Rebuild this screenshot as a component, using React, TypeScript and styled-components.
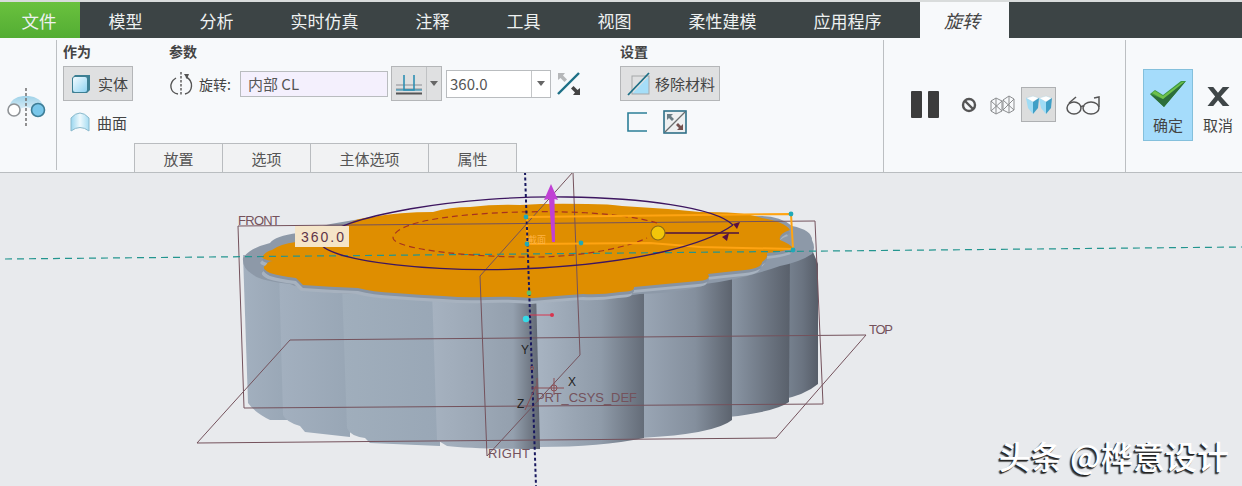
import React from "react";
import styled, { createGlobalStyle } from "styled-components";

const FONT = `"Noto Sans CJK SC", "Noto Sans", sans-serif`;

const GlobalStyle = createGlobalStyle`
  html, body { margin: 0; padding: 0; background: #e8eaed; }
  * { box-sizing: border-box; }
`;

const Page = styled.div`
  width: 1242px;
  height: 486px;
  display: flex;
  flex-direction: column;
  overflow: hidden;
  font-family: ${FONT};
  color: #444;
  background: #e8eaed;
`;

const TabBar = styled.div`
  flex: none;
  display: flex;
  margin-top: 2px;
  background: #3c4445;
  box-shadow: 0 -2px 0 #d9dcdc;
  height: 36px;
`;

const Tab = styled.div`
  display: flex;
  align-items: center;
  justify-content: center;
  padding: 0 28.5px;
  font-size: 17px;
  color: #eef1f1;
`;

const FileTab = styled(Tab)`
  width: 80px;
  padding: 0 2px 0 0;
  font-size: 17.5px;
  background: linear-gradient(#6ac13e, #53ad33);
`;

const ActiveTab = styled(Tab)`
  width: 89px;
  padding: 0 5px 0 0;
  margin-left: 10px;
  background: #f7f9fb;
  color: #444;
  font-size: 18px;
  font-style: italic;
`;

const Ribbon = styled.div`
  height: 135px;
  flex: none;
  display: flex;
  background: #f7f9fb;
  border-bottom: 1px solid #b9bdc0;
`;

const LeadCell = styled.div`
  width: 57px;
  display: flex;
  align-items: center;
  padding: 4px 0 0 7px;
  border-right: 1px solid #bcbfc2;
  margin: 2px 0;
`;

const MainCell = styled.div`
  width: 827px;
  display: flex;
  flex-direction: column;
  justify-content: space-between;
  padding: 3px 0 0 6px;
  border-right: 1px solid #bcbfc2;
  margin-top: 2px;
`;

const Groups = styled.div`
  display: grid;
  grid-template-columns: 106px 451px 1fr;
`;

const Group = styled.div`
  display: flex;
  flex-direction: column;
`;

const GroupLabel = styled.div`
  height: 16px;
  line-height: 16px;
  font-size: 14px;
  font-weight: 700;
  color: #444;
  margin-bottom: 7px;
`;

const PressedButton = styled.div<{ $w: number; $gap: number }>`
  width: ${(p) => p.$w}px;
  height: 35px;
  display: flex;
  align-items: center;
  gap: ${(p) => p.$gap}px;
  padding-left: 6px;
  background: #dfe0e1;
  border: 1px solid #b4b6b8;
  font-size: 15px;
  color: #444;
  white-space: nowrap;
`;

const PlainRow = styled.div`
  display: flex;
  align-items: center;
  gap: 6px;
  height: 24px;
  margin-top: 9px;
  padding-left: 6px;
  font-size: 15px;
  color: #444;
`;

const ParamRow = styled.div`
  display: flex;
  align-items: center;
  height: 35px;
`;

const RotateLabel = styled.span`
  font-size: 14px;
  margin: 0 8px 0 6px;
  white-space: nowrap;
  width: 33px;
`;

const Field = styled.div<{ $w: number; $tint?: boolean }>`
  width: ${(p) => p.$w}px;
  height: ${(p) => (p.$tint ? 26 : 28)}px;
  display: flex;
  align-items: center;
  padding-left: ${(p) => (p.$tint ? 7 : 3)}px;
  background: ${(p) => (p.$tint ? "#f4f0fd" : "#fff")};
  border: 1px solid #b9bcbf;
  font-size: 15px;
  color: #555;
`;

const ValueField = styled(Field)`
  position: relative;
  margin-left: 4px;
`;

const FieldArrow = styled.div`
  position: absolute;
  right: 0;
  top: 0;
  bottom: 0;
  width: 19px;
  border-left: 1px solid #c4c6c8;
  display: flex;
  align-items: center;
  justify-content: center;
`;

const Caret = styled.div`
  width: 0;
  height: 0;
  border-left: 4px solid transparent;
  border-right: 4px solid transparent;
  border-top: 5px solid #666;
`;

const SplitButton = styled.div`
  width: 51px;
  height: 35px;
  margin-left: 3px;
  display: grid;
  grid-template-columns: 34px 1fr;
  background: #dfe0e1;
  border: 1px solid #b4b6b8;
`;

const SplitPart = styled.div`
  display: flex;
  align-items: center;
  justify-content: center;
  & + & {
    border-left: 1px solid #c0c2c4;
  }
`;

const IconRow = styled.div`
  display: flex;
  align-items: center;
  gap: 16px;
  margin-top: 9px;
  padding-left: 7px;
  height: 24px;
`;

const Tabs = styled.div`
  display: flex;
  height: 29px;
  margin-left: 71px;
`;

const SubTab = styled.div<{ $w: number }>`
  width: ${(p) => p.$w}px;
  display: flex;
  align-items: center;
  justify-content: center;
  background: #f1f2f3;
  border: 1px solid #b9bcbf;
  border-bottom: none;
  margin-right: -1px;
  font-size: 15px;
  color: #555;
`;

const ControlsCell = styled.div`
  display: flex;
  align-items: center;
  height: 35px;
  margin-top: 47px;
  padding-left: 27px;
`;

const ControlsFrame = styled.div`
  width: 242px;
  border-right: 1px solid #bcbfc2;
  margin-top: 2px;
`;

const Slot = styled.div<{ $ml: number; $pressed?: boolean }>`
  flex: none;
  margin-left: ${(p) => p.$ml}px;
  display: flex;
  align-items: center;
  justify-content: center;
  ${(p) =>
    p.$pressed
      ? "width: 35px; height: 35px; background: #dcdddd; border: 1px solid #aeb0b2;"
      : ""}
`;

const ActionCell = styled.div`
  flex: 1;
  display: flex;
  padding: 31px 0 0 17px;
  gap: 10px;
`;

const ActionButton = styled.div<{ $primary?: boolean }>`
  width: ${(p) => (p.$primary ? 50 : 30)}px;
  height: 72px;
  display: flex;
  flex-direction: column;
  align-items: center;
  padding-top: ${(p) => (p.$primary ? 10 : 17)}px;
  font-size: 15px;
  color: #444;
  line-height: 18px;
  background: ${(p) => (p.$primary ? "#a5dcfb" : "transparent")};
  border: ${(p) => (p.$primary ? "1px solid #84c0dc" : "none")};
`;

const ActionText = styled.span<{ $top: number }>`
  margin-top: ${(p) => p.$top}px;
  white-space: nowrap;
`;

const Viewport = styled.div`
  position: relative;
  flex: 1;
  background: #e8eaed;
`;

const Scene = styled.svg`
  display: block;
  width: 1242px;
  height: 313px;
`;

const Watermark = styled.div`
  position: absolute;
  right: 13px;
  bottom: 13px;
  font-size: 32px;
  line-height: 36px;
  font-weight: 500;
  color: #fff;
  white-space: nowrap;
  text-shadow: -1px 1px 0 #222, -2px 2px 1px #444;
`;

const PlaneText = styled.text`
  font-family: "Liberation Sans", sans-serif;
  font-size: 13px;
  fill: #74525c;
`;

const AxisText = styled.text`
  font-family: "Liberation Sans", sans-serif;
  font-size: 12px;
  fill: #222;
`;

/* ---- ribbon icons ---- */

const RevolveIcon = () => (
  <svg width="40" height="42" viewBox="0 0 40 42">
    <defs>
      <linearGradient id="archFill" x1="0" y1="0" x2="0" y2="1">
        <stop offset="0" stopColor="#9fd2e8" />
        <stop offset="1" stopColor="#dff0f8" />
      </linearGradient>
    </defs>
    <path d="M2 21 C4 12 12 10 19 10 C26 10 34 12 37 21 L26 25 C24 20 14 20 12 25 Z" fill="url(#archFill)" />
    <circle cx="7" cy="24" r="6" fill="#fff" stroke="#8f9396" strokeWidth="1.6" />
    <circle cx="31" cy="24" r="6.5" fill="#79c7ea" stroke="#3d7d96" strokeWidth="1.6" />
    <line x1="19" y1="2" x2="19" y2="40" stroke="#777" strokeWidth="1.6" strokeDasharray="3 2" />
  </svg>
);

const SolidIcon = () => (
  <svg width="22" height="22" viewBox="0 0 22 22">
    <defs>
      <linearGradient id="solidFill" x1="0" y1="0" x2="1" y2="1">
        <stop offset="0" stopColor="#f3fbff" />
        <stop offset="1" stopColor="#8fd3f2" />
      </linearGradient>
    </defs>
    <path d="M5 2 H20 V17 L17 20 H3 Q2 20 2 19 V5 Z" fill="#3d7f93" />
    <rect x="3" y="4" width="14" height="15" rx="2" fill="url(#solidFill)" />
  </svg>
);

const SurfaceIcon = () => (
  <svg width="22" height="22" viewBox="0 0 22 22">
    <defs>
      <linearGradient id="surfFill" x1="0" y1="0" x2="1" y2="0">
        <stop offset="0" stopColor="#9ad6ef" />
        <stop offset="0.5" stopColor="#eef9fd" />
        <stop offset="1" stopColor="#a5dcf2" />
      </linearGradient>
    </defs>
    <path d="M2 7 Q11 -3 20 7 V20 Q11 13 2 20 Z" fill="url(#surfFill)" stroke="#8ab9cc" strokeWidth="1" />
  </svg>
);

const RotateIcon = () => (
  <svg width="24" height="26" viewBox="0 0 24 26">
    <line x1="12" y1="1" x2="12" y2="25" stroke="#555" strokeWidth="1.4" strokeDasharray="2.5 1.5" />
    <path d="M7 7 C-1 12 1 22 9 23" fill="none" stroke="#555" strokeWidth="1.4" />
    <path d="M16 23 C24 21 25 10 17 6" fill="none" stroke="#555" strokeWidth="1.4" />
    <path d="M15 3 L20 3 L18 8 Z" fill="#555" />
  </svg>
);

const DepthIcon = () => (
  <svg width="26" height="24" viewBox="0 0 26 24">
    <line x1="0" y1="13" x2="26" y2="13" stroke="#a8aaac" strokeWidth="1.5" />
    <line x1="0" y1="17" x2="26" y2="17" stroke="#a8aaac" strokeWidth="1.5" />
    <line x1="0" y1="21.5" x2="26" y2="21.5" stroke="#555" strokeWidth="2" />
    <path d="M8 3 V18 H18 V3" fill="none" stroke="#2e8fb3" strokeWidth="1.6" />
    <line x1="0" y1="18" x2="26" y2="18" stroke="#2e8fb3" strokeWidth="1.2" />
  </svg>
);

const FlipIcon = () => (
  <svg width="24" height="24" viewBox="0 0 24 24">
    <line x1="1" y1="22" x2="22" y2="1" stroke="#1c6f86" strokeWidth="2.4" />
    <path d="M1 1 H8 L6 3.5 L10 7.5 L7.5 10 L3.5 6 L1 8 Z" fill="#b5b7b9" />
    <path d="M23 23 H16 L18 20.5 L14 16.5 L16.5 14 L20.5 18 L23 16 Z" fill="#444" />
  </svg>
);

const RemoveIcon = () => (
  <svg width="24" height="24" viewBox="0 0 24 24">
    <path d="M5 22 L22 4 V22 Z" fill="#a5def8" />
    <rect x="5" y="4" width="17" height="18" fill="none" stroke="#a5a7a9" strokeWidth="1" />
    <line x1="1" y1="23" x2="22" y2="1" stroke="#1c6f86" strokeWidth="1.8" />
  </svg>
);

const ThickenIcon = () => (
  <svg width="20" height="20" viewBox="0 0 20 20">
    <path d="M20 1 H1 V19 H20" fill="none" stroke="#2c7f98" strokeWidth="1.6" />
  </svg>
);

const ThickFlipIcon = () => (
  <svg width="24" height="24" viewBox="0 0 24 24">
    <rect x="1" y="1" width="22" height="22" fill="#eef0f1" stroke="#2f7088" strokeWidth="1.6" />
    <line x1="2" y1="22" x2="22" y2="2" stroke="#6b6d6f" strokeWidth="1.2" />
    <path d="M4 4 H10 L8 6 L11 9 L9 11 L6 8 L4 10 Z" fill="#6b7d85" />
    <path d="M20 20 H14 L16 18 L13 15 L15 13 L18 16 L20 14 Z" fill="#74514f" />
  </svg>
);

const PauseIcon = () => (
  <svg width="28" height="27" viewBox="0 0 28 27">
    <rect x="0" y="0" width="11" height="27" rx="1" fill="#3c3c3c" />
    <rect x="17" y="0" width="11" height="27" rx="1" fill="#3c3c3c" />
  </svg>
);

const BanIcon = () => (
  <svg width="16" height="16" viewBox="0 0 16 16">
    <circle cx="8" cy="8" r="6" fill="none" stroke="#555" strokeWidth="2.4" />
    <line x1="4" y1="4" x2="12" y2="12" stroke="#555" strokeWidth="2.4" />
  </svg>
);

const WireIcon = () => (
  <svg width="25" height="20" viewBox="0 0 25 20" fill="none" stroke="#8b8d8f" strokeWidth="1">
    <path d="M1 6 L6 3 L12 6 L12 16 L6 19 L1 16 Z M6 3 V19 M1 6 L12 16 M12 6 L1 16" />
    <path d="M13 5 L19 1 L24 4 L24 15 L19 18 L13 15 Z M19 1 V18 M13 5 L24 15 M24 4 L13 15" />
  </svg>
);

const ShadedIcon = () => (
  <svg width="26" height="20" viewBox="0 0 26 20">
    <path d="M0 3 L7 1 L13 3 L7 7 Z" fill="#fff" stroke="#b8d6e2" strokeWidth="0.5" />
    <path d="M0 3 L7 7 L7 19 L2 13 Z" fill="#9fdcf5" />
    <path d="M13 3 L7 7 L7 19 L12 13 Z" fill="#3f9fc6" />
    <path d="M13 3 L20 1 L26 3 L20 7 Z" fill="#fff" stroke="#b8d6e2" strokeWidth="0.5" />
    <path d="M13 3 L20 7 L20 19 L15 13 Z" fill="#9fdcf5" />
    <path d="M26 3 L20 7 L20 19 L25 13 Z" fill="#3f9fc6" />
  </svg>
);

const GlassesIcon = () => (
  <svg width="35" height="20" viewBox="0 0 35 20" fill="none" stroke="#555" strokeWidth="1.5">
    <ellipse cx="8" cy="13" rx="7" ry="6" />
    <ellipse cx="25" cy="13" rx="8" ry="6" />
    <path d="M15 12 Q17 10 18 12" />
    <path d="M3 8 L10 2" />
    <path d="M33 12 V2 L28 3" />
  </svg>
);

const CheckIcon = () => (
  <svg width="38" height="28" viewBox="0 0 38 28">
    <path d="M1 14 L6 10 L14 15 L32 1 L37 1 L15 27 Z" fill="#3f9a45" />
    <path d="M1 14 L14 19 L37 1 L15 27 Z" fill="#2c6e3a" />
    <path d="M3 13 L6 11 L14 16 L33 2 L35 2 L14 19 Z" fill="#6fc14b" />
  </svg>
);

const CrossIcon = () => (
  <svg width="26" height="21" viewBox="0 0 26 22">
    <path d="M2 1 H8 L13 7 L18 1 H25 L16 11 L25 21 H18 L13 15 L8 21 H2 L10 11 Z" fill="#3f4648" />
  </svg>
);

/* ---- the part in the viewport ---- */

const columns = [
  { d: "M243 255 H290 V420 H270 Q254 412 248 403 Z", g: "colA" },
  { d: "M279 270 H350 V437 L305 432 L300 426 Q286 422 283 415 Z", g: "colA" },
  { d: "M342 285 H440 V446 L370 443 L365 438 Q350 436 347 428 Z", g: "colB" },
  { d: "M813 252 H780 V400 Q805 395 818 384 L818 264 Z", g: "colH" },
  { d: "M790 250 H728 V417 Q775 412 789 402 Z", g: "colG" },
  { d: "M732 270 H640 V438 Q715 434 732 420 Z", g: "colF" },
  { d: "M432 290 H540 V449 Q470 449 447 446 L437 440 Z", g: "colD" },
  { d: "M536 290 H644 V438 Q600 447 540 447 Z", g: "colE" },
];

const sketchOutline =
  "M262 257 Q266 251 272 250 Q280 244 296 242 Q320 228 347 225 Q355 218 372 217 Q400 212 433 212 Q450 207 470 207 Q495 204 520 205 Q550 203 587 204 Q610 204 622 206 Q660 208 700 212 Q720 212 735 213 Q750 214 762 218 Q785 222 790 230 Q778 234 780 240 Q790 244 793 248 Q782 252 767 253 Q768 258 762 262 Q762 268 745 270 Q725 272 708 274 Q712 280 698 281 Q665 284 634 287 Q635 292 620 292 Q600 295 583 294 Q555 296 533 298 Q510 296 487 297 Q465 298 443 296 Q420 295 395 293 Q372 292 358 288 Q330 287 303 285 Q298 280 296 278 Q280 276 270 273 Q260 268 266 265 Q268 261 273 261 Q264 260 262 257 Z";

const PartBody = () => (
  <g>
    <defs>
      <linearGradient id="colA"><stop offset="0" stopColor="#a3b0bf" /><stop offset="1" stopColor="#98a6b5" /></linearGradient>
      <linearGradient id="colB"><stop offset="0" stopColor="#a0aebc" /><stop offset="1" stopColor="#99a7b6" /></linearGradient>
      <linearGradient id="colD"><stop offset="0" stopColor="#a6b2c0" /><stop offset="0.75" stopColor="#94a0ae" /><stop offset="0.93" stopColor="#6d7581" /><stop offset="1" stopColor="#5d646f" /></linearGradient>
      <linearGradient id="colE"><stop offset="0" stopColor="#a8b4c2" /><stop offset="0.6" stopColor="#8f9ba9" /><stop offset="1" stopColor="#646c78" /></linearGradient>
      <linearGradient id="colF"><stop offset="0" stopColor="#9ba7b6" /><stop offset="0.6" stopColor="#848f9d" /><stop offset="1" stopColor="#5c636e" /></linearGradient>
      <linearGradient id="colG"><stop offset="0" stopColor="#8d99a8" /><stop offset="1" stopColor="#59606b" /></linearGradient>
      <linearGradient id="colH"><stop offset="0" stopColor="#7d8997" /><stop offset="0.6" stopColor="#6a7380" /><stop offset="1" stopColor="#565d68" /></linearGradient>
    </defs>
    {columns.map((c) => (
      <path key={c.d} d={c.d} fill={`url(#${c.g})`} />
    ))}
    {/* rim under the sketch plane */}
    <path
      d="M243 258 Q250 248 270 243 Q275 236 298 233 Q330 222 370 218 L760 216 Q780 216 792 226 Q812 230 812 240 Q816 248 812 254 Q800 262 780 266 Q740 280 705 284 Q690 292 640 294 Q600 300 533 302 Q480 303 440 301 Q400 299 360 294 Q310 293 290 284 Q260 281 252 274 Q242 268 243 258 Z"
      fill="#8d99a8"
    />
    <path d={sketchOutline} transform="translate(-2 6)" fill="#a7b2bf" />
    <path d={sketchOutline} transform="translate(0 3)" fill="#8793a2" />
    <path d={sketchOutline} fill="#df8e00" />
  </g>
);

const Overlays = () => (
  <g fill="none">
    {/* datum planes */}
    <g stroke="#74525c" strokeWidth="1">
      <path d="M238 226 L815 221 L823 404 L244 408 Z" />
      <path d="M290 340 L866 335 L776 438 L197 443 Z" />
      <path d="M573 172 L480 276 L487 456 L580 355 Z" />
    </g>

    <line x1="5" y1="259" x2="1242" y2="247" stroke="#23958f" strokeWidth="1.2" strokeDasharray="7 5" />

    {/* red sketch ellipse */}
    <path
      d="M657 223 C620 212 560 211 520 212 C450 214 395 222 393 238 C395 250 480 258 540 257 C590 256 630 246 647 238"
      stroke="#a6321f"
      strokeWidth="1.2"
      strokeDasharray="6 4"
    />

    {/* section outline */}
    <path d="M527 217 L791 214 L793 249 L700 247 L650 243 L527 244 Z" stroke="#ffa412" strokeWidth="2" />

    {/* rotation sweep */}
    <path
      d="M733 225 C715 207 640 198 567 197 C470 195 330 215 320 243 C330 262 440 274 540 268 C640 262 705 245 733 225"
      stroke="#3d1660"
      strokeWidth="1.3"
    />
    <path d="M733 224 L740 222 L737 229 Z" fill="#5a1040" />
    <path d="M722 237 L729 233 L727 241 Z" fill="#5a1040" />
    <line x1="665" y1="233" x2="739" y2="233" stroke="#4b1040" strokeWidth="1.4" />
    <circle cx="658" cy="233" r="7" fill="#f2c60a" stroke="#8b6a14" strokeWidth="1.2" />

    {/* drag arrow */}
    <path d="M551 184 L558 200 L554.5 199 L555 242 L552 242 L549 199 L544 200 Z" fill="#c040d4" />

    {/* spin axis */}
    <line x1="525" y1="172" x2="536" y2="486" stroke="#17175e" strokeWidth="2" strokeDasharray="3 2.5" />

    {/* handles */}
    <g fill="#1fa9b8">
      <circle cx="526" cy="217" r="2.4" />
      <circle cx="791" cy="214" r="2.4" />
      <circle cx="527" cy="244" r="2.4" />
      <circle cx="581" cy="243" r="2.4" />
      <circle cx="793" cy="250" r="2.4" />
    </g>
    <circle cx="529" cy="293" r="2.4" fill="#5cc26a" />
    <circle cx="526" cy="319" r="3.2" fill="#35dbe8" />
    <line x1="530" y1="315" x2="552" y2="315" stroke="#d8344f" strokeWidth="1" />
    <circle cx="552" cy="315" r="2" fill="#d8344f" />

    {/* csys */}
    <g stroke="#8a4f55" strokeWidth="1">
      <line x1="531" y1="388" x2="564" y2="388" />
      <line x1="525" y1="410" x2="536" y2="386" />
      <line x1="537" y1="378" x2="537" y2="395" />
      <circle cx="554" cy="388" r="3" />
      <circle cx="532" cy="368" r="1.6" />
      <line x1="554" y1="378" x2="554" y2="395" />
    </g>
  </g>
);

const Labels = () => (
  <g>
    <PlaneText x="238" y="225" textLength="42">FRONT</PlaneText>
    <PlaneText x="869" y="334" textLength="24">TOP</PlaneText>
    <PlaneText x="488" y="458" textLength="42">RIGHT</PlaneText>
    <PlaneText x="536" y="402" textLength="101">PRT_CSYS_DEF</PlaneText>
    <rect x="295" y="226" width="54" height="21" fill="#f5e5c8" />
    <PlaneText x="301" y="242" textLength="43" style={{ fontSize: "14px", fill: "#5f3448" }}>360.0</PlaneText>
    <text x="528" y="243" fontFamily={FONT} fontSize="9" fill="#ffb445">截面</text>
    <AxisText x="521" y="354">Y</AxisText>
    <AxisText x="568" y="386">X</AxisText>
    <AxisText x="517" y="408">Z</AxisText>
  </g>
);

const tabs = ["模型", "分析", "实时仿真", "注释", "工具", "视图", "柔性建模", "应用程序"];

export default function App() {
  return (
    <Page>
      <GlobalStyle />
      <TabBar>
        <FileTab>文件</FileTab>
        {tabs.map((t) => (
          <Tab key={t}>{t}</Tab>
        ))}
        <ActiveTab>旋转</ActiveTab>
      </TabBar>

      <Ribbon>
        <LeadCell>
          <RevolveIcon />
        </LeadCell>

        <MainCell>
          <Groups>
            <Group>
              <GroupLabel>作为</GroupLabel>
              <PressedButton $w={70} $gap={6}>
                <SolidIcon />
                实体
              </PressedButton>
              <PlainRow>
                <SurfaceIcon />
                曲面
              </PlainRow>
            </Group>

            <Group>
              <GroupLabel>参数</GroupLabel>
              <ParamRow>
                <RotateIcon />
                <RotateLabel>旋转:</RotateLabel>
                <Field $w={148} $tint>内部 CL</Field>
                <SplitButton>
                  <SplitPart>
                    <DepthIcon />
                  </SplitPart>
                  <SplitPart>
                    <Caret />
                  </SplitPart>
                </SplitButton>
                <ValueField $w={105}>
                  360.0
                  <FieldArrow>
                    <Caret />
                  </FieldArrow>
                </ValueField>
                <Slot $ml={6}>
                  <FlipIcon />
                </Slot>
              </ParamRow>
            </Group>

            <Group>
              <GroupLabel>设置</GroupLabel>
              <PressedButton $w={100} $gap={4}>
                <RemoveIcon />
                移除材料
              </PressedButton>
              <IconRow>
                <ThickenIcon />
                <ThickFlipIcon />
              </IconRow>
            </Group>
          </Groups>

          <Tabs>
            <SubTab $w={89}>放置</SubTab>
            <SubTab $w={89}>选项</SubTab>
            <SubTab $w={119}>主体选项</SubTab>
            <SubTab $w={89}>属性</SubTab>
          </Tabs>
        </MainCell>

        <ControlsFrame>
          <ControlsCell>
            <Slot $ml={0}><PauseIcon /></Slot>
            <Slot $ml={22}><BanIcon /></Slot>
            <Slot $ml={13}><WireIcon /></Slot>
            <Slot $ml={6} $pressed><ShadedIcon /></Slot>
            <Slot $ml={10}><GlassesIcon /></Slot>
          </ControlsCell>
        </ControlsFrame>

        <ActionCell>
          <ActionButton $primary>
            <CheckIcon />
            <ActionText $top={8}>确定</ActionText>
          </ActionButton>
          <ActionButton>
            <CrossIcon />
            <ActionText $top={9}>取消</ActionText>
          </ActionButton>
        </ActionCell>
      </Ribbon>

      <Viewport>
        <Scene viewBox="0 173 1242 313">
          <PartBody />
          <Overlays />
          <Labels />
        </Scene>
        <Watermark>头条 @桦意设计</Watermark>
      </Viewport>
    </Page>
  );
}
